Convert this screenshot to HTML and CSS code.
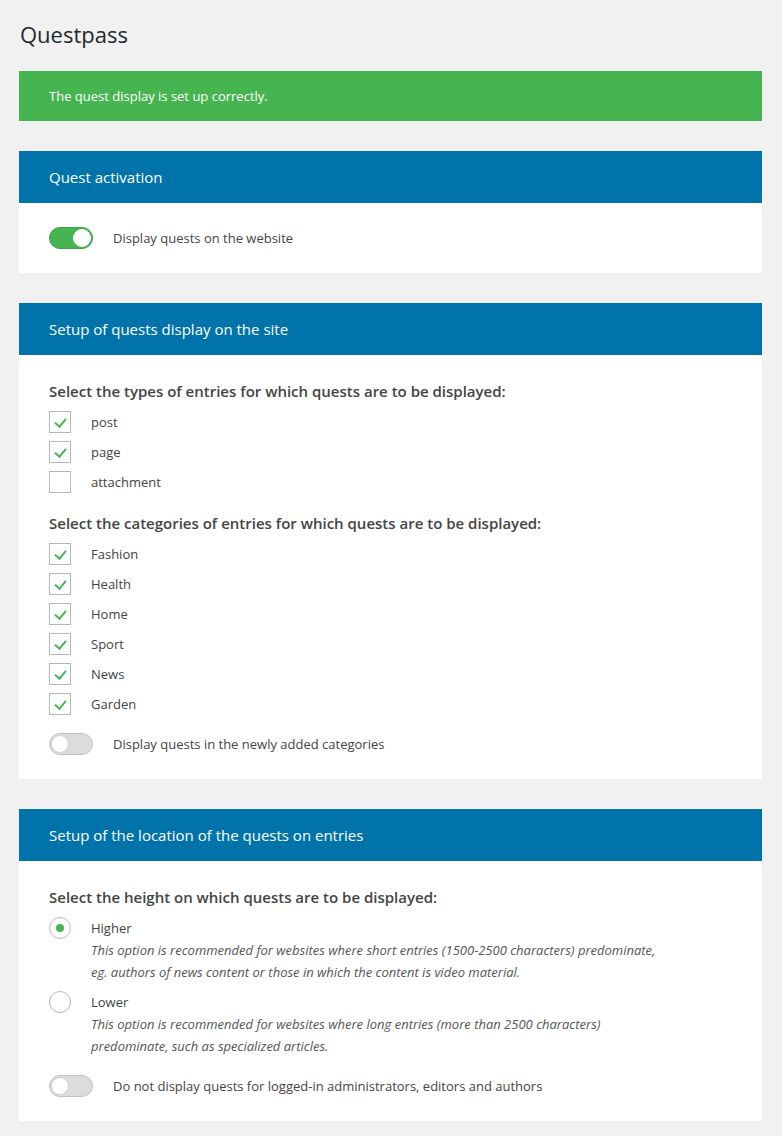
FILE: index.html
```html
<!DOCTYPE html>
<html lang="en">
<head>
<meta charset="utf-8">
<title>Questpass</title>
<link rel="stylesheet" href="styles.css">
</head>
<body>
<div class="wrap">
  <h1 class="page-title">Questpass</h1>
  <div class="notice">The quest display is set up correctly.</div>

  <section class="card">
    <div class="card-head">Quest activation</div>
    <div class="card-body">
      <label class="toggle-row"><span class="toggle on"><span class="knob"></span></span><span class="toggle-label">Display quests on the website</span></label>
    </div>
  </section>

  <section class="card">
    <div class="card-head">Setup of quests display on the site</div>
    <div class="card-body">
      <h3 class="field-title">Select the types of entries for which quests are to be displayed:</h3>
      <ul class="options">
        <li class="opt"><span class="box checked"></span><span class="opt-label">post</span></li>
        <li class="opt"><span class="box checked"></span><span class="opt-label">page</span></li>
        <li class="opt"><span class="box"></span><span class="opt-label">attachment</span></li>
      </ul>
      <h3 class="field-title spaced">Select the categories of entries for which quests are to be displayed:</h3>
      <ul class="options">
        <li class="opt"><span class="box checked"></span><span class="opt-label">Fashion</span></li>
        <li class="opt"><span class="box checked"></span><span class="opt-label">Health</span></li>
        <li class="opt"><span class="box checked"></span><span class="opt-label">Home</span></li>
        <li class="opt"><span class="box checked"></span><span class="opt-label">Sport</span></li>
        <li class="opt"><span class="box checked"></span><span class="opt-label">News</span></li>
        <li class="opt"><span class="box checked"></span><span class="opt-label">Garden</span></li>
      </ul>
      <label class="toggle-row after-list"><span class="toggle"><span class="knob"></span></span><span class="toggle-label">Display quests in the newly added categories</span></label>
    </div>
  </section>

  <section class="card">
    <div class="card-head">Setup of the location of the quests on entries</div>
    <div class="card-body">
      <h3 class="field-title">Select the height on which quests are to be displayed:</h3>
      <ul class="options">
        <li class="opt"><span class="radio checked"></span><div class="opt-text"><span class="opt-label">Higher</span><p class="desc">This option is recommended for websites where short entries (1500-2500 characters) predominate, eg. authors of news content or those in which the content is video material.</p></div></li>
        <li class="opt"><span class="radio"></span><div class="opt-text"><span class="opt-label">Lower</span><p class="desc">This option is recommended for websites where long entries (more than 2500 characters) predominate, such as specialized articles.</p></div></li>
      </ul>
      <label class="toggle-row after-list"><span class="toggle"><span class="knob"></span></span><span class="toggle-label">Do not display quests for logged-in administrators, editors and authors</span></label>
    </div>
  </section>
</div>
</body>
</html>
```
FILE: styles.css
```css
* { box-sizing: border-box; }
html, body { margin: 0; padding: 0; }
body {
  background: #f1f1f1;
  font-family: "Open Sans", "Noto Sans", sans-serif;
  font-size: 13px;
  color: #444;
}
.wrap {
  padding: 18px 20px 15px 19px;
}
.page-title {
  margin: 0 0 21px 1px;
  font-size: 22px;
  font-weight: 400;
  line-height: 32px;
  color: #23282d;
}
.notice {
  background: #46b450;
  color: #fff;
  height: 50px;
  display: flex;
  align-items: center;
  padding-left: 30px;
  margin-bottom: 30px;
}
.card {
  background: #fff;
  margin-bottom: 30px;
}
.card-head {
  background: #0073aa;
  color: #fff;
  font-size: 15px;
  height: 52px;
  display: flex;
  align-items: center;
  padding-left: 30px;
}
.card-body {
  padding: 24px 30px;
}
.field-title {
  margin: 1px 0 9px;
  font-size: 15px;
  font-weight: 600;
  line-height: 22px;
  color: #444;
}
.field-title.spaced { margin-top: 19px; }
.options {
  list-style: none;
  margin: 0;
  padding: 0;
  display: flex;
  flex-direction: column;
  gap: 8px;
}
.opt {
  display: flex;
  align-items: flex-start;
  gap: 20px;
  line-height: 22px;
}
.box {
  width: 22px;
  height: 22px;
  border: 1px solid #b4b9be;
  flex: none;
  position: relative;
}
.box.checked::after {
  content: "";
  position: absolute;
  left: 7px;
  top: 4px;
  width: 5px;
  height: 9px;
  border-right: 2px solid #46b450;
  border-bottom: 2px solid #46b450;
  transform: rotate(40deg);
}
.radio {
  width: 22px;
  height: 22px;
  border: 1px solid #b4b9be;
  border-radius: 50%;
  flex: none;
  display: flex;
  align-items: center;
  justify-content: center;
}
.radio.checked::after {
  content: "";
  width: 8px;
  height: 8px;
  border-radius: 50%;
  background: #46b450;
}
.opt-text { display: flex; flex-direction: column; }
.desc {
  margin: 0;
  font-style: italic;
  color: #555;
  max-width: 570px;
}
.toggle-row {
  display: flex;
  align-items: center;
  gap: 20px;
}
.toggle-row.after-list { margin-top: 18px; }
.toggle {
  width: 44px;
  height: 22px;
  border-radius: 11px;
  background: #dcdcde;
  border: 1px solid #c3c4c7;
  display: flex;
  align-items: center;
  padding: 1px;
  flex: none;
}
.knob {
  width: 18px;
  height: 18px;
  border-radius: 50%;
  background: #fff;
  border: 1px solid #d0d0d0;
}
.toggle.on {
  background: #46b450;
  border-color: #3fa34a;
  justify-content: flex-end;
}
.toggle.on .knob { border-color: #fff; }
.toggle-label { line-height: 22px; }
```
